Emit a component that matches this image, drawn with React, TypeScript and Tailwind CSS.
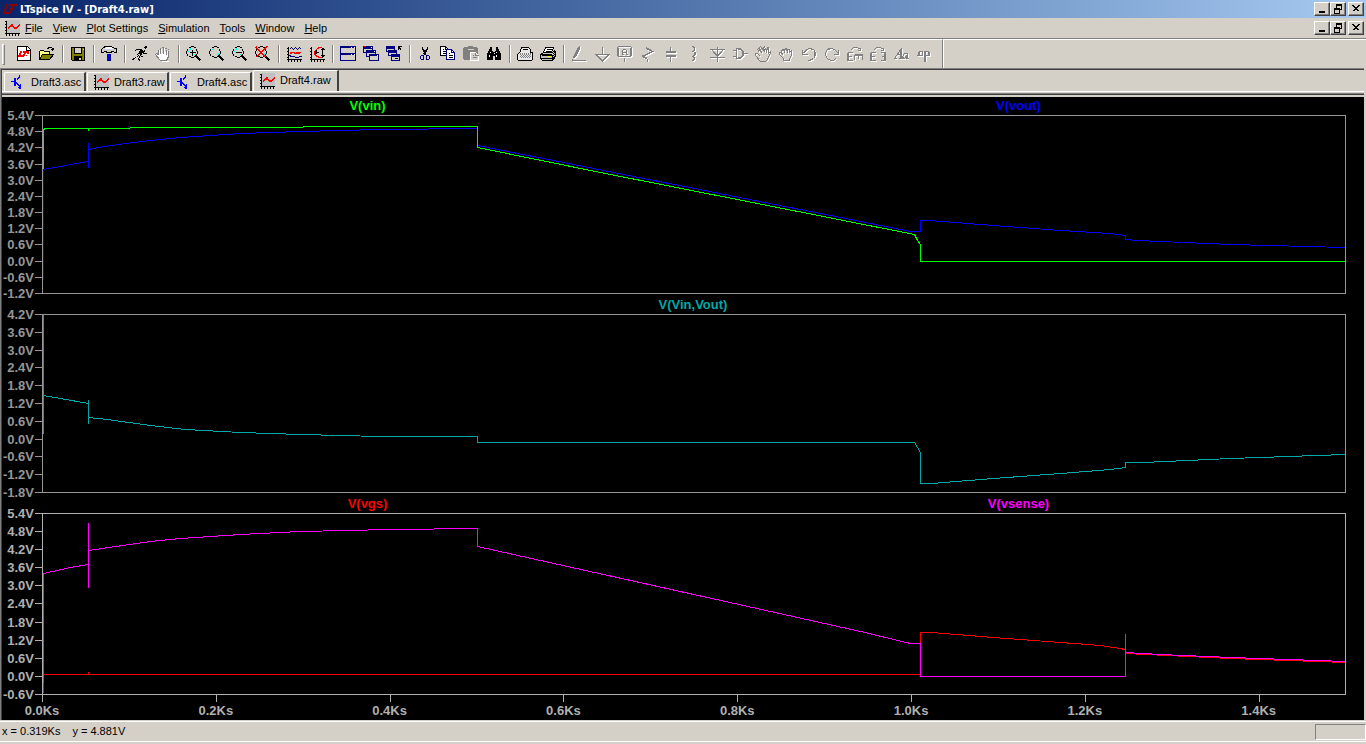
import type { ReactNode } from "react"

const NAVY = "#000080"
const GRAY = "#808080"

function Icon({ children, size = 16 }: { children: ReactNode, size?: number }) {
    return (
        <svg width={size} height={size} viewBox={`-0.5 -0.5 ${size} ${size}`} shapeRendering="crispEdges" fill="none" stroke="#000" strokeWidth="1" className="block shrink-0" aria-hidden="true">
            {children}
        </svg>
    )
}

// greyed glyph with the white shadow of a disabled button
function Disabled({ children }: { children: ReactNode }) {
    return (
        <Icon>
            <g transform="translate(1 1)" stroke="#fff">{children}</g>
            <g stroke={GRAY}>{children}</g>
        </Icon>
    )
}

function PlotIcon() {
    return (
        <Icon>
            <rect x="2" y="0" width="13" height="12" fill="#c0c0c0" stroke="#c0c0c0" />
            <path d="M2 0V15M0 13H15M0 1H2M0 4H2M0 7H2M0 10H2M5 13V15M8 13V15M11 13V15M14 13V15" />
            <path d="M3 7H4L6 5H8L10 7H12L15 4M3 8H4L6 6H8L10 8H12L15 5M6 4H8" stroke="#f00" />
        </Icon>
    )
}

function SchematicIcon() {
    return (
        <Icon>
            <path d="M0 7H4M4 3V11M5 3V11M6 6L9 3V0M6 5L9 2M6 8L10 12M6 9L9 12M10 9V14M7 13H10M8 12H10M9 11V14" stroke="#00f" />
        </Icon>
    )
}

function Lens({ children }: { children?: ReactNode }) {
    return (
        <Icon>
            <path d="M4 0H7M2 1H4M7 1H9M1 2V4M10 2V4M0 4V7M11 4V7M1 7V9M10 7V9M2 10H4M7 10H9M4 11H7" />
            <path d="M2 4V5M3 3L5 2M8 8L7 9M9 6V7M3 4L4 3M8 9L9 8" stroke="#0ff" />
            <path d="M9 9L14 14M10 9L15 14M9 10L14 15" />
            {children}
        </Icon>
    )
}

type Tool = { name: string, icon: ReactNode, off?: boolean }

const groups: Tool[][] = [
    [
        { name: "New Schematic", icon: <Icon>
            <path d="M1 0H11L14 3V14H1Z" fill="#fff" />
            <path d="M10 0V4H14" />
            <path d="M5 5L3 9H6M4 5L2 10H7L9 7M6 5H12M6 6H12L11 8M8 7L6 10M9 9H10" stroke="#f00" />
        </Icon> },
        { name: "Open", icon: <Icon>
            <path d="M0 13V5L1 4H4L5 5H10V8" fill="#ff8" />
            <path d="M0 13L3 8H14L10 13Z" fill="#808000" />
            <path d="M8 2L10 1H12L13 2V4M11 3H14M14 1V3" />
        </Icon> },
    ],
    [
        { name: "Save", icon: <Icon>
            <path d="M1 1H14V14H2L1 13Z" fill="#808000" />
            <path d="M4 1H11V7H4Z" fill="#d4d0c8" />
            <path d="M4 10H11V14H4Z" fill="#000" />
            <path d="M9 11V13M10 11V13" stroke="#d4d0c8" />
            <path d="M13 2V3" stroke="#d4d0c8" />
        </Icon> },
    ],
    [
        { name: "Control Panel", icon: <Icon>
            <path d="M0 3L2 1L4 0H10L13 2H15V6H13L12 5H10V6H5V5H3L2 6H0Z" fill="#ccc" />
            <path d="M4 1H10M3 2H11" stroke="#fff" />
            <path d="M6 7V14M7 7V14M8 7V14" stroke="#00f" />
            <path d="M9 7V14M6 14H9" stroke={NAVY} />
        </Icon> },
    ],
    [
        { name: "Run", icon: <Icon>
            <path d="M12 0H14M11 1H14M12 2H13M4 3H9L11 5M8 4L6 8M9 4L7 8M10 5L8 9M11 5L13 4M4 3L2 5M5 8L7 10L6 13L8 14M8 9L11 11M6 9L4 11L1 12M0 13L3 12M11 7H14M10 6L12 7" />
        </Icon> },
        { name: "Halt", off: true, icon: <Icon>
            <path d="M3 3V8M5 2V7M8 1V7M11 3V8M3 8L1 7L0 8L5 14H11L13 10V4" stroke={GRAY} fill="#fff" />
            <path d="M4 3V8M6 2V7M9 1V7M12 4V8M4 9L8 12M6 15H13" stroke="#fff" />
            <path d="M4 2H5M6 1H8M9 2H11M12 3H13M5 14H11" stroke={GRAY} />
        </Icon> },
    ],
    [
        { name: "Zoom in", icon: <Lens><path d="M3 6H9M6 3V9" /></Lens> },
        { name: "Zoom area", icon: <Lens /> },
        { name: "Zoom back", icon: <Lens><path d="M3 6H9" /></Lens> },
        { name: "Zoom full extents", icon: <Lens>
            <path d="M0 1L10 11M1 1L11 11M12 0L1 11M11 0L0 11M0 0H1" stroke="#f00" />
        </Lens> },
    ],
    [
        { name: "Autorange", icon: <Icon>
            <path d="M2 0V15M0 13H15M0 2H2M0 5H2M0 8H2M0 11H2M5 13V15M8 13V15M11 13V15M14 13V15" />
            <path d="M3 3L5 1L7 3L9 1L11 3L13 1L15 3M3 9L5 10H8L9 11H12L13 10H15" stroke={NAVY} />
            <path d="M3 6H7L9 7H12L15 6M3 7H5M9 6H13" stroke="#f00" />
        </Icon> },
        { name: "Pan", icon: <Icon>
            <path d="M2 0V15M0 13H15M0 2H2M0 5H2M0 8H2M0 11H2M5 13V15M8 13V15M11 13V15M14 13V15" />
            <path d="M12 1H10L8 2L6 4L5 6V7L6 9L8 10L10 11H12" stroke="#f00" />
            <path d="M13 1V11M12 2H14M12 10H14M11 3H15M11 9H15M6 6H9M7 4L6 6L7 8" />
        </Icon> },
    ],
    [
        { name: "Tile windows", icon: <Icon>
            <path d="M0 0H15V14H0ZM0 7H15" stroke={NAVY} fill="#d4d0c8" />
            <path d="M0 1H15M0 8H15" stroke={NAVY} />
            <path d="M10 1H11M13 1H14M10 8H11M13 8H14" stroke="#fff" />
        </Icon> },
        { name: "Cascade windows", icon: <Icon>
            <g stroke={NAVY} fill="#d4d0c8">
                <path d="M0 0H9V6H0ZM0 1H9M0 2H9" />
                <path d="M3 4H12V10H3ZM3 5H12M3 6H12" />
                <path d="M6 8H15V14H6ZM6 9H15" />
            </g>
            <path d="M0 0H2" stroke="#f00" />
            <path d="M7 1H8M10 5H11M13 9H14" stroke="#fff" />
        </Icon> },
        { name: "Close all", icon: <Icon>
            <g stroke={NAVY} fill="#d4d0c8">
                <path d="M0 0H8V5H0ZM0 1H8M0 2H8" />
                <path d="M2 4H10V9H2ZM2 5H10M2 6H10" />
                <path d="M5 8H13V14H5ZM5 9H13M5 10H13" />
            </g>
            <path d="M12 0H15M12 0V3M12 0L15 4M8 12H11" />
        </Icon> },
    ],
    [
        { name: "Cut", icon: <Icon>
            <path d="M5 0V3L9 9M6 3L9 8M10 0V3L6 9M9 3L6 8" />
            <path d="M4 9H6V13H4L3 12V10ZM9 9H11L12 10V12L11 13H9Z" stroke={NAVY} />
        </Icon> },
        { name: "Copy", icon: <Icon>
            <path d="M0 0H5L8 3V9H0Z" fill="#fff" />
            <path d="M5 0V3H8M2 3H3M2 5H6M2 7H6" />
            <path d="M6 3H11L14 6V13H6Z" fill="#fff" stroke={NAVY} />
            <path d="M11 3V6H14" stroke={NAVY} />
            <path d="M8 7H9M8 9H12M8 11H12" />
        </Icon> },
        { name: "Paste", off: true, icon: <Icon>
            <path d="M1 1H4L5 0H9L10 1H13L14 2V13H1L0 12V2Z" fill={GRAY} stroke={GRAY} />
            <path d="M4 3H10" stroke="#d4d0c8" />
            <path d="M7 6H12L15 9V14H7Z" fill="#d4d0c8" stroke="#fff" />
            <path d="M12 6V9H15M9 9H10M9 11H13" stroke={GRAY} />
        </Icon> },
        { name: "Find", icon: <Icon>
            <path d="M4 1H5V4L6 6V13H1V8L3 4ZM10 1H11L12 4L14 8V13H9V6L10 4ZM6 6H9V9H6Z" fill="#000" />
            <path d="M4 5V6M3 8V10M10 5V6M10 8V10M7 7H8" stroke="#fff" />
        </Icon> },
    ],
    [
        { name: "Print Setup", icon: <Icon>
            <path d="M4 1H11L13 3V6H15V13L14 14H1L0 13V8L3 5Z" fill="#e8e8e8" />
            <path d="M5 3H10" />
            <path d="M2 7H13M3 9H12M2 8H13M2 10H13M3 11H12" stroke={GRAY} strokeDasharray="1 1" />
        </Icon> },
        { name: "Print", icon: <Icon>
            <path d="M5 1H13L11 6H3Z" fill="#fff" />
            <path d="M6 3H11M5 5H10" />
            <path d="M3 6H12L14 4L15 6V10L12 14H2L0 12V8Z" fill="#c0c0c0" />
            <path d="M0 8H11M0 12H12M1 9H12V13M14 6L12 8M14 8L12 10M14 10L12 12" />
            <path d="M7 10H10" stroke="#ff0" />
        </Icon> },
    ],
    [
        { name: "Wire", off: true, icon: <Disabled><path d="M7 0H8M6 1H8M5 2H8M5 3H8M4 4H7M4 5H7M3 6H6M3 7H6M2 8H5M2 9H5M1 10H4M1 11H3M1 12V14M1 14H14" /></Disabled> },
        { name: "Ground", off: true, icon: <Disabled><path d="M8 0V8M0 8H15M1 8L8 15L15 8M3 9L8 14L13 9" /></Disabled> },
        { name: "Label Net", off: true, icon: <Disabled>
            <path d="M1 0H13L14 1V9L13 10H1L0 9V1ZM7 11V15M5 8V4L6 3H8L9 4V8M4 8H6M8 8H10M5 6H9M1 1V9M13 1V9" />
        </Disabled> },
        { name: "Resistor", off: true, icon: <Disabled><path d="M6 0V2L12 5L2 10L7 13V15M7 2L11 4M2 9L7 12" /></Disabled> },
        { name: "Capacitor", off: true, icon: <Disabled><path d="M7 0V5M2 5H12M2 6H12M2 9H12M2 10H12M7 10V15" /></Disabled> },
        { name: "Inductor", off: true, icon: <Disabled><path d="M5 0H6L8 1V3L6 5H5M6 5L9 6V8L6 10H5M6 10L8 11V13L6 14H5M8 1V4M8 6V9M8 11V13" /></Disabled> },
        { name: "Diode", off: true, icon: <Disabled><path d="M8 0V15M0 3H15M2 3L8 10L14 3M3 4L8 9L13 4M0 11H15" /></Disabled> },
        { name: "Component", off: true, icon: <Disabled><path d="M0 4H3M0 10H3M4 2V12M3 2H8L11 5V9L8 12H3M5 3H8L10 5V9L8 11H5M11 7H15" /></Disabled> },
        { name: "Move", off: true, icon: <Disabled>
            <path d="M4 6L2 3L3 2L7 7M5 4L4 1L5 0L9 5L8 1L9 0L11 5L12 1L13 1L13 7L15 5V6L12 13L10 15H5L0 9V7H2L5 10" />
        </Disabled> },
        { name: "Drag", off: true, icon: <Disabled>
            <path d="M3 7V4L5 3L6 6V3L8 2L9 6V3H11V6L13 4V9L11 12V14H5V12L1 8V6H3L5 9" />
        </Disabled> },
        { name: "Undo", off: true, icon: <Disabled>
            <path d="M1 3V8H6M1 7L5 3L8 2L12 3L14 6V9L12 12L8 14H6M2 7L5 4M13 5V10" />
        </Disabled> },
        { name: "Redo", off: true, icon: <Disabled>
            <path d="M14 3V8H9M14 7L10 3L7 2L3 3L1 6V9L3 12L6 14H9L11 12M3 3L5 2" />
        </Disabled> },
        { name: "Rotate", off: true, icon: <Disabled>
            <path d="M0 6V14M1 6V14M0 6H5M0 10H4M0 14H5M7 8H15M7 9H15M7 8V13M11 8V12M15 8V13M3 4L6 1H10L13 3M13 1V4H10" />
        </Disabled> },
        { name: "Mirror", off: true, icon: <Disabled>
            <path d="M0 6V14M1 6V14M0 6H5M0 10H4M0 14H5M10 6H15M11 10H15M10 14H15M14 6V14M15 6V14M3 4L6 1H10L13 3M13 1V4H10" />
        </Disabled> },
        { name: "Text", off: true, icon: <Disabled>
            <path d="M0 12H3M1 12L8 2V12M7 4V12M5 12H9M4 8H8M14 7H11L9 10V12H11L14 8L13 12H15M10 10V12M14 7V12" />
        </Disabled> },
        { name: "SPICE Directive", off: true, icon: <Disabled>
            <path d="M0 9H1M3 5H6V9H3ZM8 15V5H12V9H8M3 5V9M9 5V15M2 5V9M13 5V9" />
        </Disabled> },
    ],
]

const menus = ["File", "View", "Plot Settings", "Simulation", "Tools", "Window", "Help"]

const tabs = [
    { name: "Draft3.asc", raw: false },
    { name: "Draft3.raw", raw: true },
    { name: "Draft4.asc", raw: false },
    { name: "Draft4.raw", raw: true },
]
const activeTab = "Draft4.raw"

type Trace = { color: string, points: string[] }
type PaneData = { titles: { text: string, cls: string }[], labels: string[], top: number, height: number, cls: string, traces: Trace[] }

const panes: PaneData[] = [
    {
        titles: [{ text: "V(vin)", cls: "text-[#00ff00]" }, { text: "V(vout)", cls: "text-[#0000ff]" }],
        labels: ["5.4V", "4.8V", "4.2V", "3.6V", "3.0V", "2.4V", "1.8V", "1.2V", "0.6V", "0.0V", "-0.6V", "-1.2V"],
        top: 115,
        height: 179,
        cls: "text-[#969696] flex-[179]",
        traces: [
            { color: "#0000ff", points: [
                "43,279 43,169 60,166 75,163 88,161",
                "88,142 88,167",
                "88,149 98,147 118,144 150,140 180,137 210,135 240,133 300,131 380,129 477,128 477,145 860,221 910,231 920,231 920,220 929,220 993,225 1060,230 1110,233 1125,235 1125,239 1137,240 1230,244 1345,247",
            ] },
            { color: "#00ff00", points: [
                "43,168 43,129 45,128 129,128 130,127 302,127 303,126 477,126 477,147 600,172 914,234 917,240 920,244 920,261 1345,261",
                "88,127 88,130",
            ] },
        ],
    },
    {
        titles: [{ text: "V(Vin,Vout)", cls: "text-[#00a8a8]" }],
        labels: ["4.2V", "3.6V", "3.0V", "2.4V", "1.8V", "1.2V", "0.6V", "0.0V", "-0.6V", "-1.2V", "-1.8V"],
        top: 314,
        height: 179,
        cls: "text-[#969696] flex-[179]",
        traces: [
            { color: "#00a8a8", points: [
                "43,314 43,433",
                "43,395 60,398 88,403",
                "88,399 88,423",
                "88,417 107,419 150,425 185,429 240,432 300,434 380,436 477,436 477,442 914,442 917,447 920,452 920,483 931,483 993,478 1060,473 1110,469 1125,467 1125,462 1143,462 1230,458 1345,454",
            ] },
        ],
    },
    {
        titles: [{ text: "V(vgs)", cls: "text-[#ff0000]" }, { text: "V(vsense)", cls: "text-[#ff00ff]" }],
        labels: ["5.4V", "4.8V", "4.2V", "3.6V", "3.0V", "2.4V", "1.8V", "1.2V", "0.6V", "0.0V", "-0.6V"],
        top: 513,
        height: 182,
        cls: "text-[#b0b0b0] flex-[182]",
        traces: [
            { color: "#ff0000", points: [
                "43,692 43,674 920,674 920,632 931,632 993,637 1060,642 1100,645 1113,647 1125,649 1125,653 1230,658 1345,662",
                "88,671 88,674",
            ] },
            { color: "#ff00ff", points: [
                "43,682 43,573 52,571 70,567 88,564",
                "88,522 88,587",
                "88,550 115,546 150,541 180,538 210,536 240,534 300,531 390,529 477,528 477,546 860,631 910,643 920,643 920,676 1125,676 1125,633",
                "1125,652 1160,654 1230,657 1345,661",
            ] },
        ],
    },
]

const times = ["0.0Ks", "0.2Ks", "0.4Ks", "0.6Ks", "0.8Ks", "1.0Ks", "1.2Ks", "1.4Ks"]

function Pane({ pane, first }: { pane: PaneData, first: boolean }) {
    return (
        <>
            <div className={`grid auto-cols-fr grid-flow-col items-center pr-5 pl-10 text-center ${first ? "h-[18px] pb-[2px]" : "h-5"}`}>
                {pane.titles.map(t => <span key={t.text} className={t.cls}>{t.text}</span>)}
            </div>
            <div className={`flex min-h-0 pr-[18px] ${pane.cls}`}>
                <div className="flex w-10 shrink-0 flex-col justify-between">
                    {pane.labels.map(l => (
                        <div key={l} className="flex h-px items-center justify-end gap-px">
                            <span>{l}</span>
                            <span className="h-px w-[7px] shrink-0 bg-current" />
                        </div>
                    ))}
                </div>
                <svg className="h-full min-w-0 flex-1" viewBox={`41.5 ${pane.top - 0.5} 1304 ${pane.height}`} preserveAspectRatio="none" shapeRendering="crispEdges" fill="none">
                    <rect x="42" y={pane.top} width="1303" height={pane.height - 1} stroke="currentColor" />
                    {pane.traces.map(t => t.points.map(p => (
                        <polyline key={p} points={p} stroke={t.color} vectorEffect="non-scaling-stroke" />
                    )))}
                </svg>
            </div>
        </>
    )
}

function WindowButtons() {
    const btn = "flex h-[14px] w-4 items-center justify-center border border-t-white border-l-white border-r-[#404040] border-b-[#404040] bg-[#d4d0c8] shadow-[inset_-1px_-1px_0_#808080]"
    return (
        <div className="ml-auto flex pr-[2px]">
            <button className={btn} aria-label="Minimize">
                <Icon size={10}><path d="M1 8H7M1 7H7" /></Icon>
            </button>
            <button className={btn} aria-label="Restore">
                <Icon size={10}><path d="M3 4V0H8V5H6M3 1H8M1 4H6V9H1ZM1 5H6" /></Icon>
            </button>
            <button className={`${btn} ml-[2px]`} aria-label="Close">
                <Icon size={10}><path d="M1 1L7 7M2 1L8 7M7 1L1 7M8 1L2 7" /></Icon>
            </button>
        </div>
    )
}

function App() {
    return (
        <div className="flex h-screen flex-col overflow-hidden bg-[#d4d0c8] font-['Liberation_Sans',Arial,sans-serif] text-[11px] leading-[13px] text-black">
            <header className="flex h-[18px] shrink-0 items-center bg-linear-to-r from-[#0a246a] to-[#a6caf0] pl-[2px]">
                <Icon>
                    <path d="M4 3L1 12H5M5 3L2 12M3 11H6M7 3H14M6 4H14M10 4L7 12H5M11 4L8 12M9 7H6" stroke="#900000" />
                </Icon>
                <h1 className="pl-[2px] font-['DejaVu_Sans_Condensed','DejaVu_Sans',sans-serif] font-bold text-white">LTspice IV - [Draft4.raw]</h1>
                <WindowButtons />
            </header>

            <nav className="flex h-5 shrink-0 items-center pl-1">
                <PlotIcon />
                {menus.map(m => (
                    <button key={m} className="px-[5px]"><span className="underline">{m[0]}</span>{m.slice(1)}</button>
                ))}
                <WindowButtons />
            </nav>

            <div className="flex h-[30px] shrink-0 border-t border-[#808080]">
                <div className="flex items-center border-t border-r border-t-white border-r-[#808080] pr-[6px] pl-[2px]">
                    <div className="mr-2 h-[21px] w-[3px] border border-t-white border-l-white border-r-[#808080] border-b-[#808080]" />
                    {groups.map((g, i) => (
                        <div key={i} className="flex items-center">
                            {i > 0 && <div className="mx-[3px] h-[18px] w-[2px] border-l border-l-[#808080] bg-white" />}
                            {g.map(t => (
                                <button key={t.name} title={t.name} aria-label={t.name} disabled={t.off} className="flex h-[22px] w-[23px] items-center pl-[3px]">
                                    {t.icon}
                                </button>
                            ))}
                        </div>
                    ))}
                </div>
                <div className="flex-1 border-t border-l border-white" />
            </div>

            <main className="mr-[2px] flex min-h-0 flex-1 flex-col border-t border-l border-[#808080]">
                <div className="flex min-h-0 flex-1 flex-col border-t border-l border-[#404040]">
                    <div role="tablist" className="flex h-[21px] shrink-0 items-end gap-px pl-[2px]">
                        {tabs.map(t => t.name === activeTab ? (
                            <button key={t.name} role="tab" aria-selected="true" className="flex h-[21px] w-[86px] items-center gap-[5px] rounded-tl-xs border-t border-r-2 border-l border-t-white border-r-[#404040] border-l-white pb-px pl-[5px]">
                                <PlotIcon />{t.name}
                            </button>
                        ) : (
                            <button key={t.name} role="tab" aria-selected="false" className="flex h-[19px] w-[82px] items-center gap-[5px] rounded-tl-xs border-t border-r-2 border-l border-t-white border-r-[#404040] border-l-white pl-[5px]">
                                {t.raw ? <PlotIcon /> : <SchematicIcon />}<span className="pt-px">{t.name}</span>
                            </button>
                        ))}
                    </div>
                    <div className="h-[2px] shrink-0 border-t border-white" />
                    <div className="h-1 shrink-0 border-t border-b-2 border-t-[#808080] border-b-[#d4d0c8] bg-[#404040]" />

                    <section className="flex min-h-0 flex-1 flex-col bg-black text-[13px] leading-[15px] font-bold">
                        {panes.map((p, i) => <Pane key={p.top} pane={p} first={i === 0} />)}
                        <div className="flex h-[25px] shrink-0 pr-[18px] pl-10 text-[#b0b0b0]">
                            {times.map(t => (
                                <div key={t} className="w-[13.33%] shrink-0 last:shrink">
                                    <div className="h-[7px] w-px bg-current" />
                                    <div className="w-fit -translate-x-1/2 pt-px">{t}</div>
                                </div>
                            ))}
                        </div>
                    </section>
                </div>
            </main>

            <footer className="flex h-6 shrink-0 flex-col pt-px">
                <div className="flex flex-1 items-center border-t border-b border-white pl-[2px]">
                    <span>x = 0.319Ks</span>
                    <span className="pl-3">y = 4.881V</span>
                    <div className="ml-auto h-4 w-[51px] border border-t-[#808080] border-r-white border-b-white border-l-[#808080]" />
                </div>
                <div className="h-[2px]" />
            </footer>
        </div>
    )
}

export default App
